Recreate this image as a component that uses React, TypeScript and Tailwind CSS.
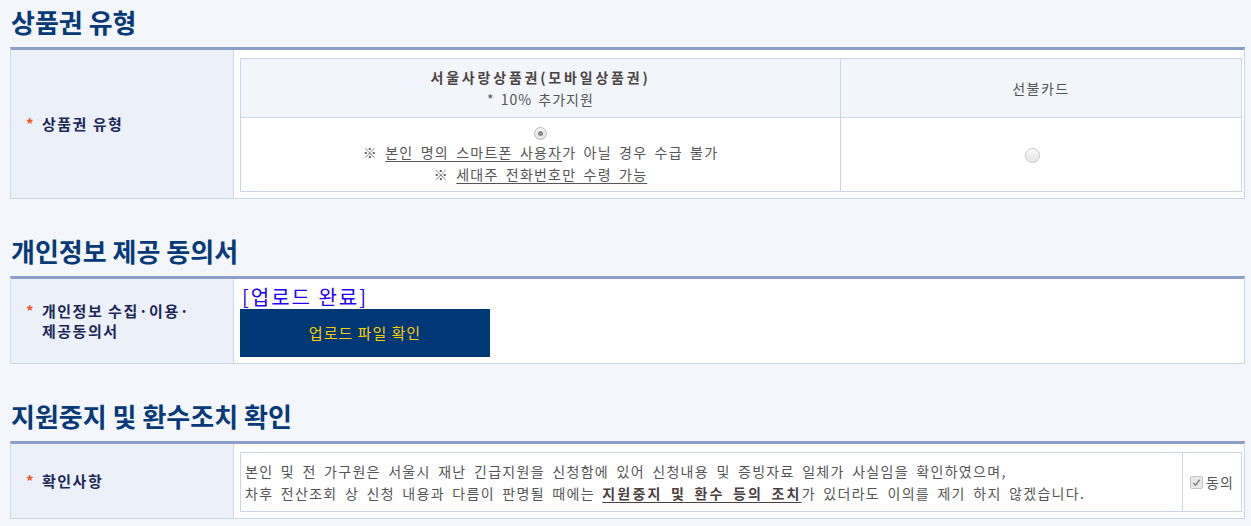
import React from "react";

const font = { fontFamily: '"Noto Sans CJK KR", "Noto Sans", sans-serif' };

function Heading({ children }: { children: React.ReactNode }) {
  return (
    <h2 className="pt-[6px] pb-[9px] pl-[1px] text-[26px] leading-[32px] font-bold text-[#073a78]">
      {children}
    </h2>
  );
}

function Label({ children }: { children: React.ReactNode }) {
  return (
    <div className="w-[223px] shrink-0 bg-[#ecf1f9] border-r border-[#cdd6e6] flex items-center pl-[15px] pr-[8px]">
      <div className="flex items-start">
        <span className="text-[#ee5522] text-[15px] font-bold w-[16px] shrink-0 leading-[20px]">*</span>
        <span className="text-[15px] font-bold leading-[20px] text-[#1c2858] tracking-[1.5px]">{children}</span>
      </div>
    </div>
  );
}

function Radio({ checked }: { checked?: boolean }) {
  return (
    <span className="inline-flex w-[13px] h-[13px] rounded-full border border-[#b9b9b9] bg-gradient-to-b from-[#f7f7f7] to-[#e2e2e2] items-center justify-center">
      {checked && <span className="w-[5px] h-[5px] rounded-full bg-[#8c8c8c]" />}
    </span>
  );
}

export default function App() {
  return (
    <div className="min-h-[526px] w-full bg-[#f3f6fa] text-[14px] text-[#555]" style={font}>
      <div className="w-[1235px] ml-[10px]">
        <Heading>상품권 유형</Heading>
        <div className="border-t-[3px] border-t-[#8b9fca] border-x border-b border-[#cdd6e6] bg-white flex h-[152px]">
          <Label>상품권 유형</Label>
          <div className="flex-1 pl-[6px] pr-[2px] pt-[8px] pb-[6px]">
            <div className="border border-[#cdd6e6] h-full flex flex-col">
              <div className="flex h-[59px] bg-[#f2f6fa] border-b border-[#cdd6e6]">
                <div className="w-[600px] border-r border-[#cdd6e6] flex flex-col items-center justify-center">
                  <div className="font-bold text-[#4d4545] leading-[22px] tracking-[2.8px]">서울사랑상품권(모바일상품권)</div>
                  <div className="leading-[22px] text-[#555] tracking-[1px] [word-spacing:2px]">* 10% 추가지원</div>
                </div>
                <div className="flex-1 flex items-center justify-center tracking-[1.5px] text-[#555]">선불카드</div>
              </div>
              <div className="flex flex-1">
                <div className="w-[600px] border-r border-[#cdd6e6] flex flex-col items-center pt-[9px] tracking-[1.2px] [word-spacing:3px] text-[#555]">
                  <Radio checked />
                  <div className="leading-[22px] mt-[1px]">
                    ※ <span className="underline underline-offset-[3px]">본인 명의 스마트폰 사용자</span>가 아닐 경우 수급 불가
                  </div>
                  <div className="leading-[22px]">
                    ※ <span className="underline underline-offset-[3px]">세대주 전화번호만 수령 가능</span>
                  </div>
                </div>
                <div className="flex-1 flex items-center justify-center pt-[2px] pr-[18px]">
                  <span className="inline-flex w-[15px] h-[15px] rounded-full border border-[#c6c6c6] bg-gradient-to-b from-[#fafafa] to-[#e6e6e6]" />
                </div>
              </div>
            </div>
          </div>
        </div>

        <div className="mt-[30px]">
          <Heading>개인정보 제공 동의서</Heading>
          <div className="border-t-[3px] border-t-[#8b9fca] border-x border-b border-[#cdd6e6] bg-white flex h-[88px]">
            <Label>
              개인정보 수집·이용·
              <br />
              제공동의서
            </Label>
            <div className="flex-1 pl-[6px] pt-[6px]">
              <div className="text-[20px] leading-[24px] text-[#2200ff] tracking-[2px] pl-[2px]">[업로드 완료]</div>
              <button className="w-[250px] h-[48px] bg-[#003775] text-[#ffcc00] text-[15px] tracking-[1px]">
                업로드 파일 확인
              </button>
            </div>
          </div>
        </div>

        <div className="mt-[30px]">
          <Heading>지원중지 및 환수조치 확인</Heading>
          <div className="border-t-[3px] border-t-[#8b9fca] border-x border-b border-[#cdd6e6] bg-white flex h-[78px]">
            <Label>확인사항</Label>
            <div className="flex-1 pl-[6px] pr-[2px] pt-[8px] pb-[6px]">
              <div className="border border-[#cdd6e6] h-full flex">
                <div className="flex-1 border-r border-[#cdd6e6] flex flex-col justify-center pl-[4px] tracking-[1.3px] [word-spacing:3px] text-[#555]">
                  <div className="leading-[22px] whitespace-nowrap">
                    본인 및 전 가구원은 서울시 재난 긴급지원을 신청함에 있어 신청내용 및 증빙자료 일체가 사실임을 확인하였으며,
                  </div>
                  <div className="leading-[22px] whitespace-nowrap">
                    차후 전산조회 상 신청 내용과 다름이 판명될 때에는{" "}
                    <span className="font-bold underline underline-offset-[3px] text-[#4a4040] tracking-[2.2px]">지원중지 및 환수 등의 조치</span>가 있더라도 이의를 제기 하지 않겠습니다.
                  </div>
                </div>
                <div className="w-[58px] flex items-center justify-center gap-[3px] text-[#555] text-[14px]">
                  <span className="w-[13px] h-[13px] border border-[#c4c4c4] rounded-[2px] bg-[#e8e8e8] flex items-center justify-center">
                    <svg width="9" height="9" viewBox="0 0 10 10">
                      <path d="M1.5 5.5 L4 8 L8.5 2" stroke="#8a8a8a" strokeWidth="1.8" fill="none" />
                    </svg>
                  </span>
                  <span className="tracking-[1px]">동의</span>
                </div>
              </div>
            </div>
          </div>
        </div>
      </div>
    </div>
  );
}
